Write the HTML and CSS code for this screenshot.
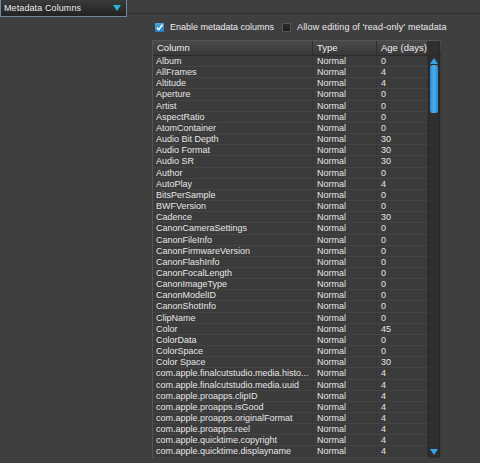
FILE: index.html
```html
<!DOCTYPE html>
<html>
<head>
<meta charset="utf-8">
<link rel="stylesheet" href="styles.css">
</head>
<body>
<div class="topbar">
  <div class="dropdown"><span class="dd-label">Metadata Columns</span><span class="dd-arrow"></span></div>
  <div class="rule"></div>
</div>
<div class="content">
  <div class="checks">
    <label class="check"><span class="box on"><svg viewBox="0 0 9 9" width="9" height="9"><path d="M1.8 4.6 L3.8 6.8 L7.4 1.6" fill="none" stroke="#fff" stroke-width="1.5"/></svg></span>Enable metadata columns</label>
    <label class="check"><span class="box off"></span>Allow editing of 'read-only' metadata</label>
  </div>
  <div class="table">
    <div class="thead">
      <div class="th">Column</div>
      <div class="th">Type</div>
      <div class="th">Age (days)</div>
      <div class="th corner"></div>
    </div>
    <div class="tbody">
      <div class="rows">
        <div class="row"><span>Album</span><span>Normal</span><span>0</span></div>
        <div class="row"><span>AllFrames</span><span>Normal</span><span>4</span></div>
        <div class="row"><span>Altitude</span><span>Normal</span><span>4</span></div>
        <div class="row"><span>Aperture</span><span>Normal</span><span>0</span></div>
        <div class="row"><span>Artist</span><span>Normal</span><span>0</span></div>
        <div class="row"><span>AspectRatio</span><span>Normal</span><span>0</span></div>
        <div class="row"><span>AtomContainer</span><span>Normal</span><span>0</span></div>
        <div class="row"><span>Audio Bit Depth</span><span>Normal</span><span>30</span></div>
        <div class="row"><span>Audio Format</span><span>Normal</span><span>30</span></div>
        <div class="row"><span>Audio SR</span><span>Normal</span><span>30</span></div>
        <div class="row"><span>Author</span><span>Normal</span><span>0</span></div>
        <div class="row"><span>AutoPlay</span><span>Normal</span><span>4</span></div>
        <div class="row"><span>BitsPerSample</span><span>Normal</span><span>0</span></div>
        <div class="row"><span>BWFVersion</span><span>Normal</span><span>0</span></div>
        <div class="row"><span>Cadence</span><span>Normal</span><span>30</span></div>
        <div class="row"><span>CanonCameraSettings</span><span>Normal</span><span>0</span></div>
        <div class="row"><span>CanonFileInfo</span><span>Normal</span><span>0</span></div>
        <div class="row"><span>CanonFirmwareVersion</span><span>Normal</span><span>0</span></div>
        <div class="row"><span>CanonFlashInfo</span><span>Normal</span><span>0</span></div>
        <div class="row"><span>CanonFocalLength</span><span>Normal</span><span>0</span></div>
        <div class="row"><span>CanonImageType</span><span>Normal</span><span>0</span></div>
        <div class="row"><span>CanonModelID</span><span>Normal</span><span>0</span></div>
        <div class="row"><span>CanonShotInfo</span><span>Normal</span><span>0</span></div>
        <div class="row"><span>ClipName</span><span>Normal</span><span>0</span></div>
        <div class="row"><span>Color</span><span>Normal</span><span>45</span></div>
        <div class="row"><span>ColorData</span><span>Normal</span><span>0</span></div>
        <div class="row"><span>ColorSpace</span><span>Normal</span><span>0</span></div>
        <div class="row"><span>Color Space</span><span>Normal</span><span>30</span></div>
        <div class="row"><span>com.apple.finalcutstudio.media.histo...</span><span>Normal</span><span>4</span></div>
        <div class="row"><span>com.apple.finalcutstudio.media.uuid</span><span>Normal</span><span>4</span></div>
        <div class="row"><span>com.apple.proapps.clipID</span><span>Normal</span><span>4</span></div>
        <div class="row"><span>com.apple.proapps.isGood</span><span>Normal</span><span>4</span></div>
        <div class="row"><span>com.apple.proapps.originalFormat</span><span>Normal</span><span>4</span></div>
        <div class="row"><span>com.apple.proapps.reel</span><span>Normal</span><span>4</span></div>
        <div class="row"><span>com.apple.quicktime.copyright</span><span>Normal</span><span>4</span></div>
        <div class="row"><span>com.apple.quicktime.displayname</span><span>Normal</span><span>4</span></div>
      </div>
      <div class="scrollbar">
        <span class="arrow up"></span>
        <span class="thumb"></span>
        <span class="track-fill"></span>
        <span class="arrow down"></span>
      </div>
    </div>
  </div>
</div>
</body>
</html>
```
FILE: styles.css
```css
html, body {
  margin: 0;
  padding: 0;
  background: #3f3f3f;
  color: #e6e6e6;
  font-family: "Liberation Sans", Arial, sans-serif;
  overflow: hidden;
}
.topbar {
  display: flex;
  align-items: flex-start;
  height: 17px;
}
.dropdown {
  width: 127px;
  height: 17px;
  border: 1px solid #6d8aa0;
  border-top: none;
  background: linear-gradient(#3a3a3a, #222);
  display: flex;
  align-items: center;
  justify-content: space-between;
  padding: 0 3px 0 3px;
  box-sizing: border-box;
}
.dd-label {
  font-size: 9px;
  color: #ececec;
  letter-spacing: 0.1px;
}
.dd-arrow {
  width: 0;
  height: 0;
  border-left: 4px solid transparent;
  border-right: 4px solid transparent;
  border-top: 6px solid #27b3cc;
  margin-right: 2px;
}
.rule {
  flex: 1;
  height: 13px;
  border-bottom: 1px solid #2e2e2e;
}
.content {
  padding-left: 152px;
}
.checks {
  display: flex;
  align-items: center;
  height: 10px;
  margin-top: 5px;
  margin-left: 3px;
  font-size: 9px;
  color: #ececec;
}
.check {
  display: flex;
  align-items: center;
  margin-right: 8px;
}
.check + .check {
  letter-spacing: 0.15px;
}
.box {
  width: 9px;
  height: 9px;
  margin-right: 6px;
  border-radius: 1px;
  box-sizing: border-box;
  display: inline-flex;
}
.box.on {
  background: linear-gradient(#4aa7e0, #1f7fc0);
}
.box.off {
  background: linear-gradient(#2a2a2a, #1e1e1e);
  border: 1px solid #555;
}
.table {
  margin-top: 8px;
  width: 288px;
  background: #3b3b3b;
  border-left: 1px solid #545454;
}
.thead {
  display: grid;
  grid-template-columns: 160px 64px 51px 12px;
  height: 14px;
  background: linear-gradient(#4a4a4a, #383838);
  border-top: 1px solid #555;
  border-bottom: 1px solid #2a2a2a;
  font-size: 9.5px;
  color: #f0f0f0;
}
.th {
  padding-left: 4px;
  line-height: 14px;
  border-right: 1px solid #2e2e2e;
}
.th.corner {
  background: #2f2f2f;
  border-right: 1px solid #2a2a2a;
}
.tbody {
  display: flex;
}
.rows {
  width: 275px;
}
.row {
  display: grid;
  grid-template-columns: 160px 64px 51px;
  height: 11.17px;
  line-height: 11px;
  font-size: 9px;
  box-sizing: border-box;
  border-bottom: 1px solid #444;
  white-space: nowrap;
}
.row span {
  padding-left: 3px;
  overflow: hidden;
  border-right: 1px solid #363636;
}
.row span:nth-child(2), .row span:nth-child(3) {
  padding-left: 4px;
}
.scrollbar {
  width: 12px;
  background: #2f2f2f;
  border-left: 1px solid #262626;
  border-right: 1px solid #262626;
  box-sizing: border-box;
  display: flex;
  flex-direction: column;
  align-items: center;
  padding-top: 2px;
  padding-bottom: 3px;
}
.arrow {
  width: 0;
  height: 0;
  border-left: 4px solid transparent;
  border-right: 4px solid transparent;
  flex: none;
}
.arrow.up {
  border-bottom: 6px solid #3aa3e8;
}
.arrow.down {
  border-top: 6px solid #3aa3e8;
}
.thumb {
  width: 8px;
  height: 48px;
  margin-top: 1px;
  border-radius: 2px;
  background: linear-gradient(90deg, #2a86cf, #4cb0f0 50%, #2a86cf);
}
.track-fill {
  flex: 1;
}
```
